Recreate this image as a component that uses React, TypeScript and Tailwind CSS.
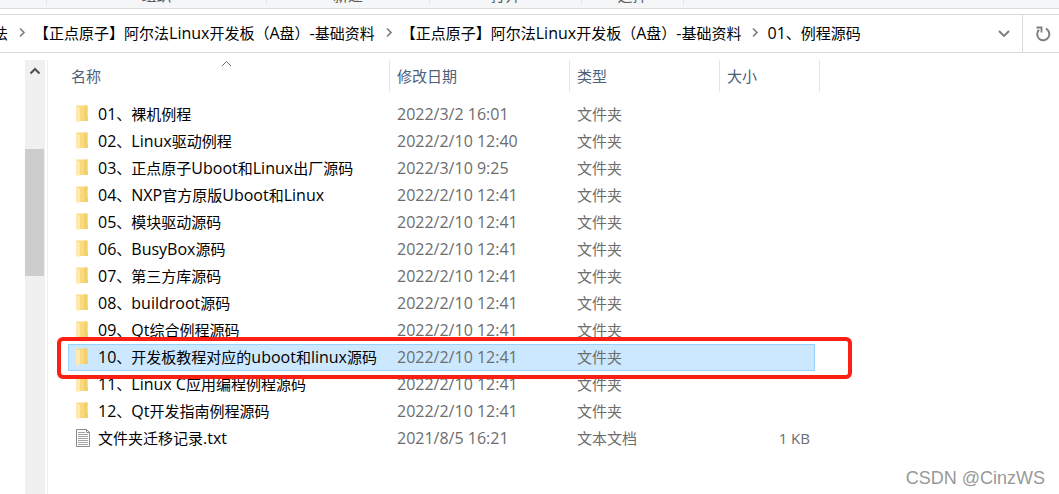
import React, { useState } from 'react';
import { clsx } from 'clsx';

interface Entry {
  name: string;
  date: string;
  type: string;
  size?: string;
}

const RIBBON_GROUPS = [
  { label: '', width: 'w-[47px]' },
  { label: '组织', width: 'w-[220px]' },
  { label: '新建', width: 'w-[163px]' },
  { label: '打开', width: 'w-[152px]' },
  { label: '选择', width: 'w-[102px]' },
];

const PATH = [
  '法',
  '【正点原子】阿尔法Linux开发板（A盘）-基础资料',
  '【正点原子】阿尔法Linux开发板（A盘）-基础资料',
  '01、例程源码',
];

const ENTRIES: Entry[] = [
  { name: '01、裸机例程', date: '2022/3/2 16:01', type: '文件夹' },
  { name: '02、Linux驱动例程', date: '2022/2/10 12:40', type: '文件夹' },
  { name: '03、正点原子Uboot和Linux出厂源码', date: '2022/3/10 9:25', type: '文件夹' },
  { name: '04、NXP官方原版Uboot和Linux', date: '2022/2/10 12:41', type: '文件夹' },
  { name: '05、模块驱动源码', date: '2022/2/10 12:41', type: '文件夹' },
  { name: '06、BusyBox源码', date: '2022/2/10 12:41', type: '文件夹' },
  { name: '07、第三方库源码', date: '2022/2/10 12:41', type: '文件夹' },
  { name: '08、buildroot源码', date: '2022/2/10 12:41', type: '文件夹' },
  { name: '09、Qt综合例程源码', date: '2022/2/10 12:41', type: '文件夹' },
  { name: '10、开发板教程对应的uboot和linux源码', date: '2022/2/10 12:41', type: '文件夹' },
  { name: '11、Linux C应用编程例程源码', date: '2022/2/10 12:41', type: '文件夹' },
  { name: '12、Qt开发指南例程源码', date: '2022/2/10 12:41', type: '文件夹' },
  { name: '文件夹迁移记录.txt', date: '2021/8/5 16:21', type: '文本文档', size: '1 KB' },
];

// Latin runs are set one pixel larger than the Chinese around them
function Mixed({ text }: { text: string }) {
  return (
    <>
      {text.split(/([\x20-\x7e]+)/).map((part, i) =>
        i % 2 ? <span key={i} className="text-[16px]">{part}</span> : part
      )}
    </>
  );
}

function FolderIcon() {
  return (
    <svg width="16" height="18" viewBox="0 0 16 18" className="shrink-0" aria-hidden="true">
      <path d="M1 .5h11.5V12l.5.5V16H4z" fill="#f9da80" />
      <path d="M9 .5h3.5V12l.5.5V16H9z" fill="#f5cf6c" />
      <path d="M1 .5l4 2.2v12.1l-1 2.7-3-1.7z" fill="#ffe9ae" />
    </svg>
  );
}

function TextFileIcon() {
  return (
    <svg width="16" height="18" viewBox="0 0 16 18" className="shrink-0" aria-hidden="true">
      <path d="M1.5.5h10l3 3v14h-13z" fill="#fff" stroke="#8a8a8a" />
      <path d="M11.5.5v3h3" fill="none" stroke="#8a8a8a" />
      <path d="M3 3.5h7M3 5.5h10M3 7.5h10M3 9.5h10M3 11.5h10M3 13.5h10M3 15.5h10" stroke="#a3a3a3" />
    </svg>
  );
}

function Ribbon() {
  return (
    <div className="flex h-[9px] items-end overflow-hidden border-b border-[#dadbdc] bg-[#f5f6f7] text-[15px] text-[#5a5a5a]">
      {RIBBON_GROUPS.map((group, i) => (
        <div key={i} className={clsx('flex h-8 shrink-0 items-end justify-center pb-[3px]', group.width)}>
          <span className="flex-1 text-center leading-5">{group.label}</span>
          <span className="h-6 w-px bg-[#e2e3e4]" />
        </div>
      ))}
    </div>
  );
}

function AddressBar() {
  return (
    <div className="mt-[5px] flex h-[39px] border-y border-[#d9d9d9] text-[15px] text-black">
      <nav className="flex min-w-0 flex-1 items-center overflow-hidden pb-0.5" aria-label="路径">
        {PATH.map((part, i) => (
          <React.Fragment key={i}>
            {i > 0 && (
              <svg width="26" height="12" viewBox="0 0 26 12" className="shrink-0" aria-hidden="true">
                <path d="M12 1.5l4 4-4 4" fill="none" stroke="#7a7a7a" strokeWidth="1.6" />
              </svg>
            )}
            <button className={clsx('shrink-0 whitespace-nowrap leading-5', i === 0 && '-ml-[7px]')}>
              <Mixed text={part} />
            </button>
          </React.Fragment>
        ))}
      </nav>
      <button className="flex w-9 shrink-0 items-center justify-center" aria-label="展开">
        <svg width="12" height="8" viewBox="0 0 12 8">
          <path d="M1 1l5 5 5-5" fill="none" stroke="#7a7a7a" strokeWidth="1.8" />
        </svg>
      </button>
      <button className="flex w-[37px] shrink-0 items-center justify-center border-l border-[#d9d9d9] pl-1" aria-label="刷新">
        <svg width="16" height="16" viewBox="0 0 16 16">
          <path d="M10.8 2.6A6.1 6.1 0 1 1 4 3.8" fill="none" stroke="#7f7f7f" strokeWidth="2" />
          <path d="M1.5 1.5h5v5" fill="none" stroke="#7f7f7f" strokeWidth="1.8" />
        </svg>
      </button>
    </div>
  );
}

function TreeScrollbar() {
  return (
    <div className="ml-[25px] flex w-5 shrink-0 flex-col bg-[#f0f0f0]">
      <button className="flex h-[22px] w-[19px] items-center justify-center" aria-label="向上滚动">
        <svg width="12" height="8" viewBox="0 0 12 8">
          <path d="M1.5 6.5L6 2l4.5 4.5" fill="none" stroke="#505050" strokeWidth="2" />
        </svg>
      </button>
      <div className="mt-[67px] h-[127px] w-[19px] bg-[#cdcdcd]" />
    </div>
  );
}

function FileTable() {
  const [selected, setSelected] = useState(9);

  return (
    <table className="w-[752px] table-fixed border-separate border-spacing-0 text-left text-[15px]">
      <colgroup>
        <col className="w-[322px]" />
        <col className="w-[180px]" />
        <col className="w-[150px]" />
        <col className="w-[95px]" />
        <col />
      </colgroup>
      <thead className="text-[#4c607a]">
        <tr className="h-8">
          <th className="relative border-r border-[#e5e5e5] p-0 pl-[3px] font-normal">
            名称
            <svg width="12" height="7" viewBox="0 0 12 7" className="absolute left-[153px] top-0" aria-hidden="true">
              <path d="M1 6l4.5-4.5L10 6" fill="none" stroke="#6d6d6d" />
            </svg>
          </th>
          <th className="border-r border-[#e5e5e5] p-0 pl-[7px] font-normal">修改日期</th>
          <th className="border-r border-[#e5e5e5] p-0 pl-[7px] font-normal">类型</th>
          <th className="p-0 pl-[7px] font-normal">大小</th>
          <th className="border-r border-[#e5e5e5] p-0" />
        </tr>
      </thead>
      <tbody className="text-[#6d6d6d] before:block before:h-[9px]">
        {ENTRIES.map((entry, i) => {
          const active = i === selected;
          const cell = clsx('h-[27px] pt-0 pb-0.5 leading-5', active && 'border-y border-[#99d1ff] bg-[#cce8ff]');
          return (
            <tr key={entry.name} onClick={() => setSelected(i)} className="relative">
              <td className={clsx(cell, active ? 'border-l pl-[6px]' : 'pl-[7px]')}>
                <div className="flex items-center gap-[7px] whitespace-nowrap text-black">
                  {entry.size ? <TextFileIcon /> : <FolderIcon />}
                  <span><Mixed text={entry.name} /></span>
                </div>
              </td>
              <td className={clsx(cell, 'pl-[7px]')}><Mixed text={entry.date} /></td>
              <td className={clsx(cell, 'pl-[7px]')}><Mixed text={entry.type} /></td>
              <td className={clsx(cell, 'pr-[5px] text-right', active && 'border-r')}>{entry.size}</td>
              <td className="p-0">
                {i === 9 && (
                  <div className="pointer-events-none absolute -bottom-2 -left-[11px] -right-8 -top-[7px] z-10 rounded-md border-4 border-[#fc1f14]" />
                )}
              </td>
            </tr>
          );
        })}
      </tbody>
    </table>
  );
}

export default function App() {
  return (
    <div className="relative flex min-h-screen flex-col overflow-hidden bg-white font-['Open_Sans','Noto_Sans_CJK_SC',sans-serif]">
      <Ribbon />
      <AddressBar />
      <div className="mt-[7px] flex flex-1">
        <TreeScrollbar />
        <div className="ml-[2px] flex-1 border-l border-[#f0f0f0] pl-5">
          <FileTable />
        </div>
      </div>
      <div className="absolute bottom-1 right-[14px] font-['Liberation_Sans',Arial,sans-serif] text-[18px] leading-6 text-[#999]">
        CSDN @CinzWS
      </div>
    </div>
  );
}
